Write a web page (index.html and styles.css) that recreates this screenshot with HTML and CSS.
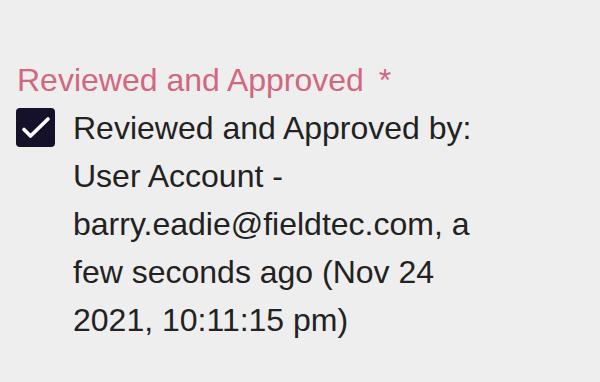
FILE: index.html
```html
<!DOCTYPE html>
<html lang="en">
<head>
    <meta charset="UTF-8">
    <meta name="viewport" content="width=device-width, initial-scale=1.0">
    <title>Reviewed and Approved</title>
    <link rel="stylesheet" href="styles.css">
</head>
<body>
    <div class="field">
        <div class="field-label">Reviewed and Approved <span class="required">*</span></div>
        <label class="check-row">
            <span class="checkbox">
                <svg viewBox="0 0 39 39" width="39" height="39">
                    <path d="M8 21.5 L14.5 28 L32 11" fill="none" stroke="#fff" stroke-width="3.6" stroke-linecap="round" stroke-linejoin="round"/>
                </svg>
            </span>
            <span class="check-text">Reviewed and Approved by: User Account - barry.eadie@fieldtec.com, a few seconds ago (Nov 24 2021, 10:11:15 pm)</span>
        </label>
    </div>
</body>
</html>
```

FILE: styles.css
```css
body {
    margin: 0;
    padding: 0;
    background-color: #eeeeee;
    font-family: "Liberation Sans", Arial, sans-serif;
    color: #222;
}

.field {
    padding: 60px 16px 0 16px;
}

.field-label {
    font-size: 32px;
    color: #d0687f;
    line-height: 40px;
    padding-left: 1px;
}

.field-label .required {
    margin-left: 6px;
}

.check-row {
    display: flex;
    align-items: flex-start;
    gap: 18px;
    margin-top: 8px;
}

.checkbox {
    flex: none;
    width: 39px;
    height: 39px;
    border-radius: 4px;
    background-color: #16112a;
}

.checkbox svg {
    display: block;
}

.check-text {
    width: 420px;
    font-size: 32px;
    line-height: 48px;
    margin-top: -4px;
}
```
